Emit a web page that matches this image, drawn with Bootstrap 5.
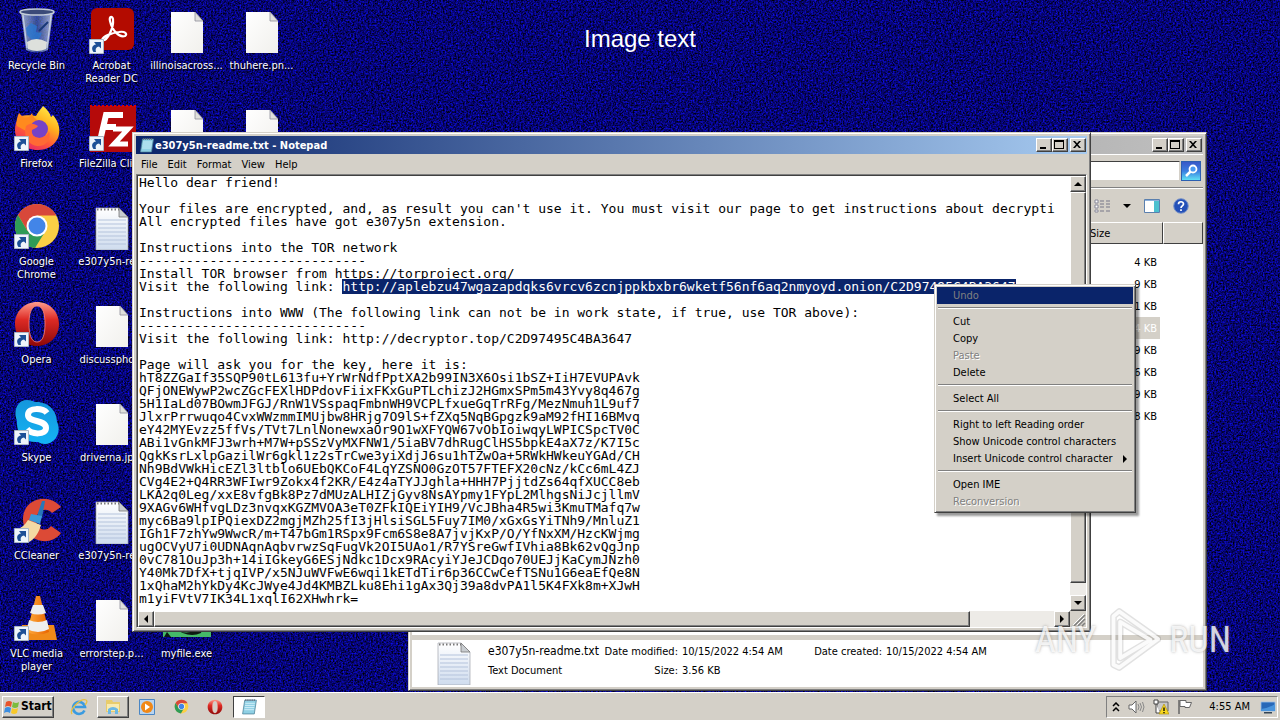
<!doctype html>
<html lang="en">
<head>
<meta charset="utf-8">
<meta name="viewport" content="width=device-width, initial-scale=1">
<title>Desktop</title>
<link href="https://cdn.jsdelivr.net/npm/bootstrap@5.3.0/dist/css/bootstrap.min.css" rel="stylesheet">
<style>
  :root { --face: #d4d0c8; --ui: "DejaVu Sans Condensed", "Liberation Sans", sans-serif; }
  body { font: 11px/13px var(--ui); color: #000; background: #07046a; }
  button, input, textarea, table { font: inherit; color: inherit; }
  svg { display: block; flex: none; }
  .noise { inset: 0; }
  .raised { border: 1px solid; border-color: #fff #404040 #404040 #fff; box-shadow: inset -1px -1px 0 #808080; background: var(--face); }

  /* Desktop icons */
  .icon-grid { grid-auto-flow: column; grid-template-rows: repeat(7, 98px); grid-auto-columns: 73px; column-gap: 2px; width: max-content; }
  .shortcut { color: #fff; text-decoration: none; text-align: center; padding-top: 6px; text-shadow: 1px 1px 1px #000; }
  .shortcut:hover { color: #fff; }
  .shortcut svg { margin: 0 auto 5px; }
  .shortcut span { display: block; white-space: nowrap; }
  .r1 { grid-row: 1; }
  .r2 { grid-row: 2; }
  .r7 { grid-row: 7; }
  .c3 { grid-column: 3; }
  .c4 { grid-column: 4; }
  .wall-text { top: 24px; left: 0; right: 0; font: 24px/30px "Liberation Sans", Arial, sans-serif; color: #fff; }

  /* Windows */
  .win { background: var(--face); border: 1px solid; border-color: var(--face) #404040 #404040 var(--face); box-shadow: inset 1px 1px 0 #fff, inset -1px -1px 0 #808080; padding: 3px; }
  .win-explorer { left: 408px; right: 73px; top: 132px; bottom: 1px; }
  .win-notepad { left: 132px; right: 189px; top: 132px; bottom: 60px; }
  .titlebar { height: 18px; flex: none; color: #fff; font-weight: bold; padding: 0 1px 0 3px; background: linear-gradient(90deg, #0a246a, #a6caf0); }
  .titlebar.inactive { background: linear-gradient(90deg, #808080, #c0c0c0); }
  .titlebar button { width: 16px; height: 14px; padding: 0; }
  .titlebar button:last-child { margin-left: 2px; }
  .menubar { height: 20px; flex: none; }
  .menubar button { border: 0; background: none; padding: 0 5px; height: 20px; }
  .edit-frame { border: 1px solid; border-color: #808080 #fff #fff #808080; box-shadow: inset 1px 1px 0 #404040; padding: 1px 0 0 1px; background: #fff; }
  .note { border: 0; resize: none; outline: 0; padding: 0 0 0 1px; font: 13px/13px "DejaVu Sans Mono", "Liberation Mono", monospace; white-space: pre; overflow: hidden; background: #fff; }
  .note::selection { background: #0a246a; color: #fff; }
  .track { background: #edebe7; }
  .sb-v { width: 16px; }
  .sb-h { height: 16px; }
  .sb-btn { width: 16px; height: 16px; padding: 0; flex: none; }
  .thumb-v { flex: 390 0 0; }
  .rest-v { flex: 12 0 0; }
  .thumb-h { flex: 817 0 0; }
  .rest-h { flex: 84 0 0; }
  .grip { width: 16px; background: var(--face); }

  /* Explorer */
  .address { height: 34px; flex: none; border-top: 1px solid #fff; border-bottom: 1px solid #808080; padding-right: 2px; gap: 1px; }
  .search { height: 20px; border: 1px solid; border-color: #404040 var(--face) var(--face) #404040; background: #fff; }
  .search-btn { width: 20px; height: 20px; border: 1px solid #2c5fb0; padding: 0; background: linear-gradient(#3858c8, #3a7de0 50%, #5fe0f4); }
  .toolrow { height: 34px; flex: none; padding-right: 14px; border-top: 1px solid #fff; gap: 13px; }
  .toolrow button { border: 0; background: none; padding: 0; }
  .views { gap: 13px; }
  .files { width: 100%; border-collapse: separate; border-spacing: 0; }
  .files th { font-weight: normal; height: 22px; border: 1px solid; border-color: #fff #404040 #404040 #fff; background: var(--face); padding: 0 5px; }
  .files td { height: 22px; padding: 0 3px; text-align: right; }
  .files tbody::before { content: ""; display: block; height: 7px; }
  .c-size { width: 79px; }
  .c-end { width: 40px; }
  .files .picked { background: linear-gradient(90deg, var(--face) 76px, #fff 76px); color: #fff; }
  .files td:nth-child(2) { padding-right: 6px; }
  .split { height: 6px; flex: none; border-top: 1px solid #fff; }
  .details { height: 47px; flex: none; background: #fff; padding: 1px 0 0 20px; gap: 8px; }
  .info { grid-template-columns: 112px 74px 122px 74px 1fr; column-gap: 4px; padding-top: 1px; }
  .info > span { line-height: 19px; white-space: nowrap; }
  .doc-name { font-size: 12px; }

  /* Context menu */
  .ctx { left: 934px; top: 284px; width: 202px; z-index: 5; background: var(--face); border: 1px solid; border-color: var(--face) #404040 #404040 var(--face); box-shadow: inset 1px 1px 0 #fff, inset -1px -1px 0 #808080, 3px 3px 2px rgba(0,0,0,.4); padding: 2px; }
  .ctx button { display: flex; width: 100%; border: 0; background: none; height: 17px; padding: 0 6px 0 16px; align-items: center; justify-content: space-between; white-space: nowrap; }
  .ctx button:disabled { color: #808080; text-shadow: 1px 1px 0 #fff; }
  .ctx button.hot { background: #0a246a; text-shadow: none; }
  .ctx hr { margin: 3px 1px 4px; border: 0; border-top: 1px solid #808080; border-bottom: 1px solid #fff; opacity: 1; height: 2px; }

  /* Watermark */
  .brandmark { right: 49px; bottom: 18px; z-index: 6; gap: 8px; color: rgba(255,255,255,.8); font: 36px/40px "Roboto Condensed", "Liberation Sans Narrow", sans-serif; text-shadow: 0 0 3px rgba(120,120,120,.6); pointer-events: none; }

  /* Taskbar */
  .taskbar { height: 28px; background: var(--face); border-top: 1px solid #fff; padding: 2px; z-index: 4; }
  .start-btn { width: 52px; height: 22px; font-weight: bold; padding: 0 1px; gap: 1px; font-size: 12px; }
  .quick { gap: 2px; margin-left: 9px; }
  .quick button { width: 32px; height: 22px; border: 1px solid transparent; background: none; padding: 0; display: flex; align-items: center; justify-content: center; }
  .quick button.raised { border-color: #fff #404040 #404040 #fff; }
  .quick button.pressed { border-color: #404040 #fff #fff #404040; background: #fff; }
  .tray { height: 22px; border: 1px solid; border-color: #808080 #fff #fff #808080; padding: 0 1px 0 5px; gap: 8px; }
  .tray button { border: 0; background: none; padding: 0; }
  .clock { margin: 0 2px 0 8px; }
</style>
</head>
<body class="vh-100 overflow-hidden d-flex flex-column">

<svg width="0" height="0" class="position-absolute" aria-hidden="true">
  <defs>
    <linearGradient id="gFox" x1="0.8" y1="0" x2="0.2" y2="1"><stop offset="0" stop-color="#fff14a"/><stop offset=".35" stop-color="#ffb01e"/><stop offset=".65" stop-color="#ff5a36"/><stop offset="1" stop-color="#e3206f"/></linearGradient>
    <linearGradient id="gPage" x1="0" y1="0" x2="1" y2="1"><stop offset="0" stop-color="#fff"/><stop offset="1" stop-color="#f1f0ec"/></linearGradient>
    <linearGradient id="gLines" x1="0" y1="0" x2="0" y2="1"><stop offset="0" stop-color="#fff"/><stop offset="1" stop-color="#cfdcee"/></linearGradient>
    <linearGradient id="gOpera" x1="0" y1="0" x2="0" y2="1"><stop offset="0" stop-color="#ff9c8c"/><stop offset=".4" stop-color="#dd2a24"/><stop offset="1" stop-color="#8c0808"/></linearGradient>
    <linearGradient id="gSkype" x1="0" y1="0" x2="0" y2="1"><stop offset="0" stop-color="#1596dc"/><stop offset="1" stop-color="#14b4f4"/></linearGradient>
    <linearGradient id="gBin" x1="0" y1="0" x2="1" y2="0"><stop offset="0" stop-color="#b8c8dc" stop-opacity=".85"/><stop offset=".5" stop-color="#4868a8" stop-opacity=".7"/><stop offset="1" stop-color="#c8d4e4" stop-opacity=".85"/></linearGradient>
    <linearGradient id="gCone" x1="0" y1="0" x2="1" y2="0"><stop offset="0" stop-color="#ffab3c"/><stop offset="1" stop-color="#e86400"/></linearGradient>
    <symbol id="arrow" viewBox="0 0 15 15"><path d="M.5.5h14v14H.5z" fill="#eef4fa" stroke="#a9b6c4"/><path d="M4.500 13C2 9.500 3 6 7 5.500L5 3H12v6.500L10 7.500C7.500 8 6 9.500 7 13z" fill="#1c4f96"/></symbol>
    <symbol id="page" viewBox="0 0 48 48"><path d="M8 6h24l8 9v32H8z" fill="url(#gPage)"/><path d="M32 6v9h8z" fill="#e0e0dc" stroke="#8d8d99" stroke-width=".8"/></symbol>
    <symbol id="textpage" viewBox="0 0 48 48"><path d="M8 6h23l9 9v33H8z" fill="url(#gLines)" stroke="#a0a4ac" stroke-width=".7"/><path d="M10 18h28M10 22h28M10 26h28M10 30h28M10 34h28M10 38h28M10 42h28" stroke="#b4c3dc"/><path d="M9 7.500h22" stroke="#777" stroke-width="2" stroke-dasharray="1.500 2"/><path d="M31 6v9h9z" fill="#c8ccd0" stroke="#777" stroke-width=".8"/></symbol>
    <symbol id="chrome" viewBox="0 0 48 48"><circle cx="24" cy="24" r="22" fill="#fbcf45"/><path d="M43 13A22 22 0 0 0 5 13l9.500 16L24 13.500h19z" fill="#d8483a"/><path d="M5 13A22 22 0 0 0 22 46l10.500-17H14.500z" fill="#2f9b56"/><circle cx="24" cy="24" r="10.500" fill="#fff"/><circle cx="24" cy="24" r="8.500" fill="#4285e8"/></symbol>
    <symbol id="opera" viewBox="0 0 48 48"><path fill-rule="evenodd" d="M24 2c12 0 22 9 22 22s-10 22-22 22S2 37 2 24 12 2 24 2zm0 4c-6 0-8 8-8 18s2 18 8 18 8-8 8-18-2-18-8-18z" fill="url(#gOpera)"/><path d="M24 6c-6 0-8 8-8 18s2 18 8 18 8-8 8-18-2-18-8-18z" fill="none" stroke="#ff8877" stroke-width=".8"/></symbol>
    <symbol id="notepad" viewBox="0 0 16 16"><path d="M3.500 2h11l-2 13h-11z" fill="#8fd0e4" stroke="#4a7f96" stroke-width=".7"/><path d="M4 5h9M3.800 7h9M3.500 9h9M3.200 11h9" stroke="#d8f2fa" stroke-width=".8"/><path d="M4 2h10" stroke="#667" stroke-width="1.500" stroke-dasharray="1 1"/></symbol>
    <symbol id="min" viewBox="0 0 12 10"><path d="M3 7h6v2H3z"/></symbol>
    <symbol id="max" viewBox="0 0 12 10"><path fill-rule="evenodd" d="M1 0h10v9H1zM2 2v6h8V2z"/></symbol>
    <symbol id="cls" viewBox="0 0 12 10"><path d="M2 1h2l2 2.200L8 1h2L7 4.500 10 8H8L6 5.800 4 8H2l3-3.500z"/></symbol>
  </defs>
</svg>

<main class="position-relative flex-grow-1 overflow-hidden">
  <svg class="noise position-absolute w-100 h-100" aria-hidden="true">
    <filter id="grain" x="0" y="0" width="100%" height="100%" color-interpolation-filters="sRGB">
      <feTurbulence type="fractalNoise" baseFrequency=".6" numOctaves="2" seed="4"/>
      <feColorMatrix values="0.100 0 0 0 -0.025  0.100 0 0 0 -0.030  1.500 0 0 0 -0.300  0 0 0 0 1"/>
    </filter>
    <rect width="100%" height="100%" filter="url(#grain)"/>
  </svg>

  <div class="wall-text position-absolute text-center">Image text</div>

  <nav class="icon-grid d-grid position-relative" aria-label="Desktop icons">
    <a class="shortcut" href="#"><svg width="48" height="48"><path d="M8 6h32l-5 38q-11 5-22 0z" fill="url(#gBin)"/><ellipse cx="24" cy="6" rx="17" ry="3" fill="#3b4a78" stroke="#c3ccd8" stroke-width="1.500"/><path d="m13 22 5-5 6 3-1 6 6 1-4 8-7-2-4-4z" fill="#2a78d0" opacity=".8"/><path d="m26 25 9-9" stroke="#183878" stroke-width="2"/><path d="M14 36q9-6 20 0l-1 7q-9 4-18 0z" fill="#dde0dc"/><path d="M10 9l4 33M38 9l-4 33" stroke="#e3ebf5" stroke-width="1.200" opacity=".7"/></svg><span>Recycle Bin</span></a>
    <a class="shortcut" href="#"><svg width="48" height="48"><path d="M23 12c2-4 4-6 7-10 4 3 7 7 8 11l2-2c6 7 8 15 5 23-4 8-11 12-20 12C11 46 2 37 2 26c0-5 1-9 4-13 8-3 14-1 17-1z" fill="url(#gFox)"/><path d="M4 22c-1-5 0-9 2-13l5 5 5-1 3-4c1 4 3 6 7 8l-1 3-7 2-5 5z" fill="#ff8a1e"/><circle cx="26" cy="25" r="9" fill="#7542c8"/><path d="M13 22c5-4 9-2 12 0-2 3-5 3-6 4-1 5 3 8 8 8 4 0 8-3 9-7 3 9-4 16-12 15-9-1-14-10-11-20z" fill="#ff6a34"/><use href="#arrow" x="1" y="32" width="15" height="15"/></svg><span>Firefox</span></a>
    <a class="shortcut" href="#"><svg width="48" height="48"><use href="#chrome" width="48" height="48"/><use href="#arrow" x="1" y="32" width="15" height="15"/></svg><span>Google<br>Chrome</span></a>
    <a class="shortcut" href="#"><svg width="48" height="48"><use href="#opera" width="48" height="48"/><use href="#arrow" x="1" y="32" width="15" height="15"/></svg><span>Opera</span></a>
    <a class="shortcut" href="#"><svg width="48" height="48"><path d="M14 2c4 0 6 1 8 2 12-1 22 8 22 20 5 10-2 22-12 22-3 0-5-1-7-2C12 45 3 36 4 23 0 13 4 2 14 2z" fill="url(#gSkype)"/><path d="M34 15c-4-5-19-6-19 2 0 8 18 4 18 13 0 7-14 7-19 1" fill="none" stroke="#fff" stroke-width="6"/><use href="#arrow" x="1" y="32" width="15" height="15"/></svg><span>Skype</span></a>
    <a class="shortcut" href="#"><svg width="48" height="48"><path d="M48 11C36-4 10 2 10 23s26 30 38 14l-10-7c-5 7-15 3-15-6s10-14 16-7z" fill="#dc4a36"/><path d="M29 5h3l-3 17-5-2z" fill="#2877b8"/><path d="m18 18 11 2-2 8-11-4z" fill="#3b9ad8"/><path d="m15 24 13 5c-2 7-6 14-12 17L3 34c5-2 9-5 12-10z" fill="#f3d9a4"/><use href="#arrow" x="1" y="32" width="15" height="15"/></svg><span>CCleaner</span></a>
    <a class="shortcut" href="#"><svg width="48" height="48"><path d="m9 31h32l3 15H5z" fill="#f08a18"/><path d="M23 2h4l9 36q-11 5-22 0z" fill="url(#gCone)"/><path d="M20 11h10l3 8q-8 3-16 0zM16 26q9 4 18 0l2 9q-11 6-22 0z" fill="#eee"/><use href="#arrow" x="1" y="32" width="15" height="15"/></svg><span>VLC media<br>player</span></a>

    <a class="shortcut" href="#"><svg width="48" height="48"><rect x="3" y="2" width="43" height="42" rx="6" fill="#b30b00"/><path d="M14 34c5 2 12-12 11-21-1-4-4-2-3 2 2 9 9 17 15 15 3-2 0-5-6-4-7 1-16 4-17 8z" fill="none" stroke="#fff" stroke-width="2.200"/><use href="#arrow" x="1" y="33" width="15" height="15"/></svg><span>Acrobat<br>Reader DC</span></a>
    <a class="shortcut" href="#"><svg width="48" height="48"><path d="M2 2h46v46H2z" fill="#b50a0a"/><path d="M2 2h46" stroke="#d00" stroke-width="2" stroke-dasharray="2 2"/><path d="M35 11H18l-6 26M15 23h13" fill="none" stroke="#fff" stroke-width="6"/><path d="M25 25h15L26 40h14" fill="none" stroke="#fff" stroke-width="5"/><use href="#arrow" x="1" y="32" width="15" height="15"/></svg><span class="text-start ps-1">FileZilla Clie</span></a>
    <a class="shortcut" href="#"><svg width="48" height="48"><use href="#textpage"/></svg><span>e307y5n-re...</span></a>
    <a class="shortcut" href="#"><svg width="48" height="48"><use href="#page"/></svg><span>discusspho...</span></a>
    <a class="shortcut" href="#"><svg width="48" height="48"><use href="#page"/></svg><span>driverna.jp...</span></a>
    <a class="shortcut" href="#"><svg width="48" height="48"><use href="#textpage"/></svg><span>e307y5n-re...</span></a>
    <a class="shortcut" href="#"><svg width="48" height="48"><use href="#page"/></svg><span>errorstep.p...</span></a>

    <a class="shortcut c3 r1" href="#"><svg width="48" height="48"><use href="#page"/></svg><span>illinoisacross...</span></a>
    <a class="shortcut c3 r2" href="#" aria-label="File"><svg width="48" height="48"><use href="#page"/></svg></a>
    <a class="shortcut c3 r7" href="#"><svg width="48" height="48"><path d="M0 0h48v43H0z" fill="#45b868"/><path d="M10 33q14 12 30-2l-2 8q-13 6-28-6z" fill="#0c1a12"/><path d="m4 38 4 5H1z" fill="#0c1a12"/></svg><span>myfile.exe</span></a>
    <a class="shortcut c4 r1" href="#"><svg width="48" height="48"><use href="#page"/></svg><span>thuhere.pn...</span></a>
    <a class="shortcut c4 r2" href="#" aria-label="File"><svg width="48" height="48"><use href="#page"/></svg></a>
  </nav>

  <section class="win win-explorer position-absolute d-flex flex-column" aria-label="File explorer">
    <div class="titlebar inactive d-flex align-items-center justify-content-end">
      <button class="raised" aria-label="Minimize"><svg width="12" height="10"><use href="#min"/></svg></button>
      <button class="raised" aria-label="Maximize"><svg width="12" height="10"><use href="#max"/></svg></button>
      <button class="raised" aria-label="Close"><svg width="12" height="10"><use href="#cls"/></svg></button>
    </div>
    <div class="address d-flex align-items-center">
      <input class="search flex-grow-1" type="search" aria-label="Search">
      <button class="search-btn" aria-label="Search"><svg width="18" height="18"><path d="m4 14 5-5" stroke="#fff" stroke-width="2.500"/><circle cx="11" cy="7" r="3.500" fill="#4a9af0" stroke="#fff" stroke-width="1.800"/></svg></button>
    </div>
    <div class="toolrow d-flex align-items-center justify-content-end">
      <button class="views d-flex align-items-center" aria-label="Views"><svg width="16" height="14"><path d="M1 1h3v3H1zM1 6h3v3H1zM1 11h3v2H1z" fill="#fff" stroke="#889"/><path d="M6 2h4M12 2h4M6 5h4M12 5h4M6 8h4M12 8h4M6 12h4M12 12h4" stroke="#778"/></svg><svg width="8" height="4"><path d="M0 0h8L4 4z"/></svg></button>
      <button aria-label="Preview pane"><svg width="16" height="14"><path d="M.5.500h15v13H.5z" fill="#fff" stroke="#5a7fae"/><path d="M10 2h5v11h-5z" fill="#4cc0d0"/><path d="M1 1h14v1H1z" fill="#8cb0dc"/></svg></button>
      <button aria-label="Help"><svg width="16" height="16"><circle cx="8" cy="8" r="7.300" fill="#2450b8" stroke="#7a94c8"/><path d="M5.500 6.200C5.500 3 10.500 3 10.500 6c0 2-2.500 1.800-2.500 4M8 11.300v1.700" fill="none" stroke="#fff" stroke-width="1.700"/></svg></button>
    </div>
    <div class="flex-grow-1 bg-white overflow-hidden">
      <table class="files">
        <thead><tr><th aria-label="Name"></th><th class="c-size">Size</th><th class="c-end" aria-label="More"></th></tr></thead>
        <tbody>
          <tr><td></td><td>4 KB</td><td></td></tr>
          <tr><td></td><td>9 KB</td><td></td></tr>
          <tr><td></td><td>1 KB</td><td></td></tr>
          <tr><td></td><td class="picked">4 KB</td><td></td></tr>
          <tr><td></td><td>9 KB</td><td></td></tr>
          <tr><td></td><td>6 KB</td><td></td></tr>
          <tr><td></td><td>9 KB</td><td></td></tr>
          <tr><td></td><td>8 KB</td><td></td></tr>
        </tbody>
      </table>
    </div>
    <div class="split"></div>
    <div class="details d-flex">
      <svg width="48" height="44" viewBox="4 4 44 44"><use href="#textpage" width="48" height="48"/></svg>
      <div class="info d-grid flex-grow-1 align-content-start">
        <span class="doc-name">e307y5n-readme.txt</span><span class="text-end">Date modified:</span><span>10/15/2022 4:54 AM</span><span class="text-end">Date created:</span><span>10/15/2022 4:54 AM</span>
        <span>Text Document</span><span class="text-end">Size:</span><span>3.56 KB</span>
      </div>
    </div>
  </section>

  <section class="win win-notepad position-absolute d-flex flex-column" aria-label="Notepad">
    <div class="titlebar d-flex align-items-center">
      <svg width="16" height="16"><use href="#notepad"/></svg>
      <span class="flex-grow-1">e307y5n-readme.txt - Notepad</span>
      <button class="raised" aria-label="Minimize"><svg width="12" height="10"><use href="#min"/></svg></button>
      <button class="raised" aria-label="Maximize"><svg width="12" height="10"><use href="#max"/></svg></button>
      <button class="raised" aria-label="Close"><svg width="12" height="10"><use href="#cls"/></svg></button>
    </div>
    <div class="menubar d-flex">
      <button>File</button><button>Edit</button><button>Format</button><button>View</button><button>Help</button>
    </div>
    <div class="edit-frame flex-grow-1 d-flex flex-column">
      <div class="d-flex flex-grow-1">
        <textarea class="note flex-grow-1" id="note" wrap="off" spellcheck="false" aria-label="Document text">Hello dear friend!

Your files are encrypted, and, as result you can't use it. You must visit our page to get instructions about decrypti
All encrypted files have got e307y5n extension.

Instructions into the TOR network
-----------------------------
Install TOR browser from https://torproject.org/
Visit the following link: http://aplebzu47wgazapdqks6vrcv6zcnjppkbxbr6wketf56nf6aq2nmyoyd.onion/C2D97495C4BA3647

Instructions into WWW (The following link can not be in work state, if true, use TOR above):
-----------------------------
Visit the following link: http://decryptor.top/C2D97495C4BA3647

Page will ask you for the key, here it is:
hT8ZZGaIf35SQP90tL613fu+YrWrNdfPptXA2b99IN3X6Osi1bSZ+IiH7EVUPAvk
QFjONEWywP2wcZGcFEXlHDPdovFiixFKxGuPTLchizJ2HGmxSPm5m43Yvy8q467g
5H1IaLd07BOwmJFGJ/RnW1VSspaqFmbnWH9VCPLfxueGqTrRFg/MezNmuh1L9uf7
JlxrPrrwuqo4CvxWWzmmIMUjbw8HRjg7O9lS+fZXq5NqBGpgzk9aM92fHI16BMvq
eY42MYEvzz5ffVs/TVt7LnlNonewxaOr9O1wXFYQW67vObIoiwqyLWPICSpcTV0C
ABi1vGnkMFJ3wrh+M7W+pSSzVyMXFNW1/5iaBV7dhRugClHS5bpkE4aX7z/K7I5c
QgkKsrLxlpGazilWr6gkl1z2sTrCwe3yiXdjJ6su1hTZwOa+5RWkHWkeuYGAd/CH
Nh9BdVWkHicEZl3ltblo6UEbQKCoF4LqYZSNO0GzOT57FTEFX20cNz/kCc6mL4ZJ
CVg4E2+Q4RR3WFIwr9Zokx4f2KR/E4z4aTYJJghla+HHH7PjjtdZs64qfXUCC8eb
LKA2q0Leg/xxE8vfgBk8Pz7dMUzALHIZjGyv8NsAYpmy1FYpL2MlhgsNiJcjllmV
9XAGv6WHfvgLDz3nvqxKGZMVOA3eT0ZFkIQEiYIH9/VcJBha4R5wi3KmuTMafq7w
myc6Ba9lpIPQiexDZ2mgjMZh25fI3jHlsiSGL5Fuy7IM0/xGxGsYiTNh9/MnluZ1
IGh1F7zhYw9WwcR/m+T47bGm1RSpx9Fcm6S8e8A7jvjKxP/O/YfNxXM/HzcKWjmg
ugOCVyU7i0UDNAqnAqbvrwzSqFugVk2OI5UAo1/R7YSreGwfIVhia8Bk62vQgJnp
0vC781OuJp3h+14iIGkeyG6ESjNdkc1Dcx9RAcyiYJeJCDqo70UEJjKaCymJNzh0
Y40Mk7DfX+tjqIVP/x5NJuWVFwE6wqi1kETdTir6p36CCwCefTSNu1G6eaEfQe8N
1xQhaM2hYkDy4KcJWye4Jd4KMBZLku8Ehi1gAx3Qj39a8dvPA1l5K4FXk8m+XJwH
m1yiFVtV7IK34L1xqlI62XHwhrk=</textarea>
        <div class="sb-v track d-flex flex-column">
          <button class="sb-btn raised" aria-label="Scroll up"><svg width="14" height="14"><path d="M3 9h8L7 5z"/></svg></button>
          <div class="thumb-v raised"></div>
          <div class="rest-v"></div>
          <button class="sb-btn raised" aria-label="Scroll down"><svg width="14" height="14"><path d="M3 5h8L7 9z"/></svg></button>
        </div>
      </div>
      <div class="sb-h track d-flex">
        <button class="sb-btn raised" aria-label="Scroll left"><svg width="14" height="14"><path d="M9 3v8L5 7z"/></svg></button>
        <div class="thumb-h raised"></div>
        <div class="rest-h"></div>
        <button class="sb-btn raised" aria-label="Scroll right"><svg width="14" height="14"><path d="M5 3v8l4-4z"/></svg></button>
        <svg class="grip" height="16"><path d="m4 15 11-11M8 15l7-7M12 15l3-3" stroke="#808080" stroke-width="1.500"/><path d="m3 14 11-11M7 14l7-7" stroke="#fff"/></svg>
      </div>
    </div>
  </section>

  <div class="ctx position-absolute" role="menu">
    <button class="hot" disabled role="menuitem">Undo</button>
    <hr>
    <button role="menuitem">Cut</button>
    <button role="menuitem">Copy</button>
    <button disabled role="menuitem">Paste</button>
    <button role="menuitem">Delete</button>
    <hr>
    <button role="menuitem">Select All</button>
    <hr>
    <button role="menuitem">Right to left Reading order</button>
    <button role="menuitem">Show Unicode control characters</button>
    <button role="menuitem">Insert Unicode control character <svg width="4" height="8"><path d="M0 0v8l4-4z"/></svg></button>
    <hr>
    <button role="menuitem">Open IME</button>
    <button disabled role="menuitem">Reconversion</button>
  </div>

  <div class="brandmark position-absolute d-flex align-items-center">
    <span>ANY</span>
    <svg width="57" height="68" viewBox="0 0 60 68"><g fill="none" stroke-linejoin="round"><path d="M17 15v38l32-19zM10 60V9l6-5 41 29-41 30z" stroke="#777" stroke-opacity=".22" stroke-width="7"/><path d="M17 15v38l32-19zM10 60V9l6-5 41 29-41 30z" stroke="#fff" stroke-opacity=".85" stroke-width="4"/></g></svg>
    <span>RUN</span>
  </div>
</main>

<footer class="taskbar d-flex align-items-center justify-content-between">
  <div class="d-flex align-items-center">
    <button class="start-btn raised d-flex align-items-center"><svg width="16" height="16"><path d="M2 3q3-2 6 0L7 8Q4 6 1 8z" fill="#e8542a"/><path d="M9 3q3 2 6 0l-1 5q-3 2-6 0z" fill="#7cbc3c"/><path d="M1 9q3-2 6 0l-1 5q-3-2-6 0z" fill="#3c8ee0"/><path d="M8 9q3 2 6 0l-1 5q-3 2-6 0z" fill="#f8c828"/></svg>Start</button>
    <div class="quick d-flex">
      <button aria-label="Internet Explorer"><svg width="18" height="18"><path d="M14.500 12.500A6 6 0 1 1 15 9H5" fill="none" stroke="#3a9be0" stroke-width="2.600"/><path d="M2 16C-1 12 10 0 16 2c2 1 0 4-1 5" fill="none" stroke="#e8c040" stroke-width="1.300"/></svg></button>
      <button class="raised" aria-label="File explorer"><svg width="18" height="17"><path d="M2 2h6l1 2h7v10H2z" fill="#e8cc6c"/><path d="M3 6h12v7H3z" fill="#f8eab0"/><path d="M4 16V11q5-4 10 0v5h-3v-4H7v4z" fill="#6cb8e4"/></svg></button>
      <button aria-label="Media Player"><svg width="16" height="16"><path d="M.5.500h15v15H.5z" fill="#b8d4f0" stroke="#4a86c4"/><circle cx="8" cy="8" r="6" fill="#f08818"/><path d="m6 4.500 5 3.500-5 3.500z" fill="#fff"/></svg></button>
      <button aria-label="Chrome"><svg width="15" height="15"><use href="#chrome"/></svg></button>
      <button aria-label="Opera"><svg width="16" height="16"><use href="#opera"/></svg></button>
      <button class="pressed" aria-label="Notepad"><svg width="17" height="17"><use href="#notepad"/></svg></button>
    </div>
  </div>
  <div class="tray d-flex align-items-center">
    <button aria-label="Show hidden icons"><svg width="8" height="10"><path d="m1 4 3-3 3 3M1 9l3-3 3 3" fill="none" stroke="#000" stroke-width="1.500"/></svg></button>
    <button aria-label="Volume"><svg width="17" height="14"><path d="M1 5h3l4-4v12L4 9H1z" fill="#fff" stroke="#666"/><path d="M10 4q2 3 0 6M12 3q3 4 0 8M14.500 2q3 5 0 10" fill="none" stroke="#888"/></svg></button>
    <button aria-label="Network"><svg width="16" height="16"><path d="M4 3h11v9H4z" fill="#c8c8c8" stroke="#666"/><path d="M1 1h4v4H1zM3 5v9h4" fill="#fff" stroke="#444"/><path d="m11 5 5 10H6z" fill="#f8d820" stroke="#a88a00" stroke-width=".6"/><path d="M11 8.500v3.500M11 13v1.200" stroke="#000" stroke-width="1.300"/></svg></button>
    <button aria-label="Action Center"><svg width="16" height="15"><path d="M2 1v14" stroke="#666" stroke-width="1.500"/><path d="M3 1.500h6v2h5.500l-2 5H8v-1H3z" fill="#fff" stroke="#666"/></svg></button>
    <span class="clock">4:55 AM</span>
    <button aria-label="Show desktop"><svg width="16" height="14"><path d="M1 2h14v9H1z" fill="#2868b8" stroke="#9cc0e8" stroke-width=".8"/><path d="M1 9q8-1 14-5v7H1z" fill="#4a94dc"/><path d="M4 12h8v1.500H4z" fill="#345"/></svg></button>
  </div>
</footer>

<script src="https://cdn.jsdelivr.net/npm/bootstrap@5.3.0/dist/js/bootstrap.bundle.min.js"></script>
<script>
  // Select the onion address, as after a double click on it.
  const note = document.getElementById('note');
  const from = note.value.indexOf('http://apleb');
  note.focus({ preventScroll: true });
  note.setSelectionRange(from, note.value.indexOf('\n', from));
  note.scrollLeft = 0;
</script>
</body>
</html>
